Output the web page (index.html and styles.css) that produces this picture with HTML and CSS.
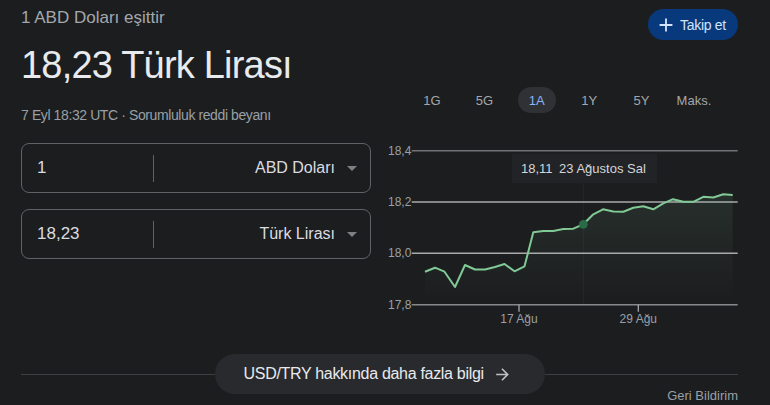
FILE: index.html
```html
<!DOCTYPE html>
<html lang="tr">
<head>
<meta charset="utf-8">
<title>USD/TRY</title>
<link rel="stylesheet" href="styles.css">
</head>
<body>
<div class="page">
  <div class="main">
    <div class="left">
      <div class="eq">1 ABD Doları eşittir</div>
      <div class="big">18,23 Türk Lirası</div>
      <div class="meta">7 Eyl 18:32 UTC · Sorumluluk reddi beyanı</div>
      <div class="conv">
        <div class="val">1</div>
        <div class="sep"></div>
        <div class="unit">ABD Doları</div>
        <div class="caret"></div>
      </div>
      <div class="conv second">
        <div class="val">18,23</div>
        <div class="sep"></div>
        <div class="unit">Türk Lirası</div>
        <div class="caret"></div>
      </div>
    </div>
    <div class="right">
      <div class="follow-row">
        <button class="follow">
          <svg class="plus" viewBox="0 0 24 24" width="22" height="22"><path d="M19 13h-6v6h-2v-6H5v-2h6V5h2v6h6v2z" fill="currentColor"/></svg>
          <span>Takip et</span>
        </button>
      </div>
      <div class="tabs">
        <span class="tab">1G</span>
        <span class="tab">5G</span>
        <span class="tab active">1A</span>
        <span class="tab">1Y</span>
        <span class="tab">5Y</span>
        <span class="tab">Maks.</span>
      </div>
      <div class="chart">
        <svg class="chart-svg" width="350" height="190" viewBox="0 0 350 190">
          <defs>
            <linearGradient id="fillg" x1="0" y1="50" x2="0" y2="160" gradientUnits="userSpaceOnUse">
              <stop offset="0" stop-color="#81c995" stop-opacity="0.11"/>
              <stop offset="1" stop-color="#81c995" stop-opacity="0"/>
            </linearGradient>
          </defs>
          <line x1="23.7" y1="10.7" x2="349.7" y2="10.7" class="g g-top"/>
          <line x1="23.7" y1="62" x2="349.7" y2="62" class="g g-mid"/>
          <line x1="23.7" y1="113.3" x2="349.7" y2="113.3" class="g g-mid"/>
          <line x1="23.7" y1="164.7" x2="349.7" y2="164.7" class="g g-bot"/>
          <text x="0" y="14.7" class="ylab">18,4</text>
          <text x="0" y="66" class="ylab">18,2</text>
          <text x="0" y="117.3" class="ylab">18,0</text>
          <text x="0" y="168.7" class="ylab">17,8</text>
          <line x1="131" y1="164.7" x2="131" y2="171.7" class="tick"/>
          <line x1="250.3" y1="164.7" x2="250.3" y2="171.7" class="tick"/>
          <text x="131" y="182.7" class="xlab">17 Ağu</text>
          <text x="250.3" y="182.7" class="xlab">29 Ağu</text>
          <line x1="195.3" y1="43" x2="195.3" y2="164" class="hover"/>
          <path class="area" d="M37 131.7 L47 127.7 L56.5 131.7 L67 147 L77 125 L87 129.5 L97 129.5 L107 127 L116.5 124 L126.5 131.3 L136.5 126.3 L145.3 92.3 L155.3 91 L165.3 91 L175.3 89 L185.3 88.7 L195.3 84.3 L205.3 74.3 L215 69.3 L225.3 71.5 L235.3 71.7 L245.3 67.7 L255.3 66.2 L265.3 69.3 L275.3 63.3 L285 59.2 L295.3 61.8 L305.3 61.8 L315.3 56.8 L325.3 57.5 L335.3 54.3 L344.7 55 L344.7 164 L37 164 Z"/>
          <path class="line" d="M37 131.7 L47 127.7 L56.5 131.7 L67 147 L77 125 L87 129.5 L97 129.5 L107 127 L116.5 124 L126.5 131.3 L136.5 126.3 L145.3 92.3 L155.3 91 L165.3 91 L175.3 89 L185.3 88.7 L195.3 84.3 L205.3 74.3 L215 69.3 L225.3 71.5 L235.3 71.7 L245.3 67.7 L255.3 66.2 L265.3 69.3 L275.3 63.3 L285 59.2 L295.3 61.8 L305.3 61.8 L315.3 56.8 L325.3 57.5 L335.3 54.3 L344.7 55"/>
          <circle cx="195.3" cy="84.3" r="4.4" class="dot"/>
        </svg>
        <div class="tooltip"><span>18,11</span><span class="tdate">23 Ağustos Sal</span></div>
      </div>
    </div>
  </div>
  <div class="more-row">
    <div class="rule"></div>
    <button class="more">
      <span>USD/TRY hakkında daha fazla bilgi</span>
      <svg viewBox="0 0 24 24" width="19" height="19"><path d="M12 4l-1.41 1.41L16.17 11H4v2h12.17l-5.58 5.59L12 20l8-8z" fill="currentColor"/></svg>
    </button>
    <div class="rule"></div>
  </div>
  <div class="feedback">Geri Bildirim</div>
</div>
</body>
</html>
```
FILE: styles.css
```css
html, body {
  margin: 0;
  padding: 0;
  background: #1c1d1f;
}
body {
  font-family: "Liberation Sans", Arial, sans-serif;
  color: #e8eaed;
  width: 770px;
  height: 405px;
  overflow: hidden;
}
.page {
  padding: 0 32px 0 21px;
}
.main {
  display: grid;
  grid-template-columns: 350px 350px;
  column-gap: 17px;
}
.left {
  padding-top: 8px;
}
.eq {
  font-size: 17px;
  line-height: 20px;
  color: #a4a8ad;
}
.big {
  margin-top: 15px;
  font-size: 38px;
  line-height: 44px;
  letter-spacing: -0.8px;
  color: #e8eaed;
}
.meta {
  margin-top: 17.5px;
  font-size: 14px;
  line-height: 20px;
  letter-spacing: -0.4px;
  color: #9aa0a6;
}
.conv {
  margin-top: 18.5px;
  height: 50px;
  box-sizing: border-box;
  border: 1px solid #5f6368;
  border-radius: 8px;
  display: flex;
  align-items: center;
}
.conv.second {
  margin-top: 16px;
}
.val {
  width: 131px;
  box-sizing: border-box;
  padding-left: 15px;
  font-size: 17px;
  color: #dadce0;
}
.sep {
  width: 1px;
  height: 27px;
  background: #5f6368;
}
.unit {
  flex: 1;
  text-align: right;
  font-size: 16px;
  color: #dadce0;
}
.caret {
  width: 0;
  height: 0;
  margin: 0 13px 0 12px;
  border-left: 5px solid transparent;
  border-right: 5px solid transparent;
  border-top: 5px solid #7d8185;
}
.right {
  padding-top: 9px;
}
.follow-row {
  display: flex;
  justify-content: flex-end;
}
.follow {
  height: 31px;
  width: 90px;
  box-sizing: border-box;
  border: none;
  border-radius: 16px;
  background: #08397d;
  color: #d2e3fc;
  display: flex;
  align-items: center;
  padding: 0 0 0 7px;
  font-family: "Liberation Sans", Arial, sans-serif;
  font-size: 14px;
  letter-spacing: -0.3px;
}
.follow .plus {
  margin-right: 3px;
  flex: none;
}
.tabs {
  margin-top: 47px;
  margin-left: 25px;
  display: flex;
  gap: 14.4px;
}
.tab {
  width: 38px;
  height: 26px;
  border-radius: 13px;
  display: flex;
  align-items: center;
  justify-content: center;
  font-size: 13px;
  color: #a3a7ab;
  white-space: nowrap;
}
.tab.active {
  background: #303134;
  color: #8ab4f8;
}
.chart {
  position: relative;
  margin-top: 27px;
  height: 190px;
}
.chart-svg {
  display: block;
}
.g { stroke-width: 1.5; }
.g-top { stroke: #727376; }
.g-mid { stroke: #a9aaac; }
.g-bot { stroke: #87888b; }
.ylab {
  font-family: "Liberation Sans", Arial, sans-serif;
  font-size: 12px;
  fill: #9aa0a6;
}
.xlab {
  font-family: "Liberation Sans", Arial, sans-serif;
  font-size: 12px;
  fill: #9aa0a6;
  text-anchor: middle;
}
.tick {
  stroke: #b0b2b5;
  stroke-width: 1.2;
}
.hover {
  stroke: rgba(255, 255, 255, 0.04);
  stroke-width: 1;
}
.area {
  fill: url(#fillg);
}
.line {
  fill: none;
  stroke: #81c995;
  stroke-width: 2;
  stroke-linejoin: round;
}
.dot {
  fill: #2a6b47;
}
.tooltip {
  position: absolute;
  left: 124px;
  top: 14px;
  width: 145px;
  height: 29px;
  box-sizing: border-box;
  padding-left: 9px;
  background: #222326;
  display: flex;
  align-items: center;
  font-size: 13px;
  color: #d4d6d9;
  white-space: nowrap;
}
.tdate {
  margin-left: 6.5px;
}
.more-row {
  margin-top: 24px;
  display: flex;
  align-items: center;
}
.rule {
  flex: 1;
  height: 1px;
  background: #3c4043;
}
.more {
  width: 330px;
  height: 40px;
  box-sizing: border-box;
  border: none;
  border-radius: 20px;
  background: #282a2d;
  color: #e8eaed;
  display: flex;
  align-items: center;
  padding: 0 0 0 29px;
  font-family: "Liberation Sans", Arial, sans-serif;
  font-size: 16px;
  letter-spacing: -0.3px;
}
.more svg {
  margin-left: 9px;
  color: #bdc1c6;
  flex: none;
}
.feedback {
  margin-top: -6.5px;
  text-align: right;
  font-size: 13px;
  line-height: 16px;
  color: #9aa0a6;
}
```
